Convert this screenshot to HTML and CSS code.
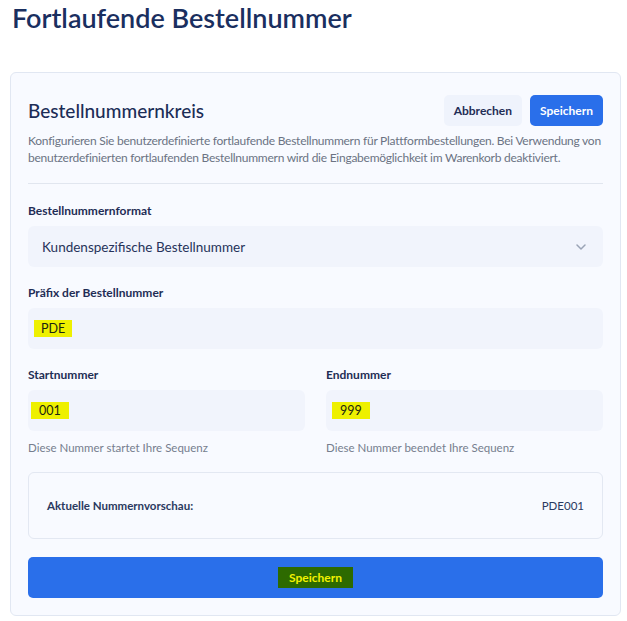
FILE: index.html
```html
<!DOCTYPE html>
<html lang="de">
<head>
<meta charset="utf-8">
<link rel="stylesheet" href="styles.css">
</head>
<body>
<h1 class="page-title">Fortlaufende Bestellnummer</h1>
<section class="card">
  <div class="card-head">
    <h2 class="card-title">Bestellnummernkreis</h2>
    <div class="actions">
      <button class="btn btn-light">Abbrechen</button>
      <button class="btn btn-primary">Speichern</button>
    </div>
  </div>
  <p class="desc">Konfigurieren Sie benutzerdefinierte fortlaufende Bestellnummern für Plattformbestellungen. Bei Verwendung von benutzerdefinierten fortlaufenden Bestellnummern wird die Eingabemöglichkeit im Warenkorb deaktiviert.</p>
  <hr class="divider">
  <div class="field first">
    <label class="label">Bestellnummernformat</label>
    <div class="control select">
      <span>Kundenspezifische Bestellnummer</span>
      <svg class="chev" width="12" height="8" viewBox="0 0 12 8"><path d="M2 2l4 4 4-4" fill="none" stroke="#9aa3b5" stroke-width="1.5" stroke-linecap="round" stroke-linejoin="round"/></svg>
    </div>
  </div>
  <div class="field">
    <label class="label">Präfix der Bestellnummer</label>
    <div class="control"><span class="hl hl-prefix">PDE</span></div>
  </div>
  <div class="row">
    <div class="field">
      <label class="label">Startnummer</label>
      <div class="control"><span class="hl hl-start">001</span></div>
      <p class="help">Diese Nummer startet Ihre Sequenz</p>
    </div>
    <div class="field">
      <label class="label">Endnummer</label>
      <div class="control"><span class="hl">999</span></div>
      <p class="help">Diese Nummer beendet Ihre Sequenz</p>
    </div>
  </div>
  <div class="preview">
    <span class="preview-label">Aktuelle Nummernvorschau:</span>
    <span class="preview-value">PDE001</span>
  </div>
  <button class="btn-block"><span class="hl-dark">Speichern</span></button>
</section>
</body>
</html>
```

FILE: styles.css
```css
* { box-sizing: border-box; }
body {
  margin: 0;
  padding: 0 6px 0 10px;
  background: #fff;
  font-family: "Lato", "Liberation Sans", sans-serif;
  color: #1f2d55;
}
.page-title {
  margin: 0;
  padding: 0 0 0 2px;
  height: 72px;
  font-size: 27px;
  font-weight: 600;
  color: #1a2f5f;
  line-height: 36px;
}
.card {
  background: #f8faff;
  border: 1px solid #e1e7f2;
  border-radius: 6px;
  padding: 22px 17px 17px 17px;
}
.card-head {
  display: flex;
  justify-content: space-between;
  align-items: center;
}
.card-title {
  margin: 0;
  font-size: 19px;
  font-weight: 500;
  color: #1c2d57;
}
.actions { display: flex; gap: 8px; }
.btn {
  font-family: inherit;
  font-size: 12px;
  font-weight: 700;
  height: 31px;
  border: 0;
  border-radius: 5px;
  padding: 0 10px;
}
.btn-light { background: #eff3fc; color: #1f2d55; }
.btn-primary { background: #2a6fea; color: #fff; }
.desc {
  margin: 6px 0 0;
  font-size: 12px;
  letter-spacing: -0.25px;
  line-height: 17px;
  color: #6b7383;
}
.divider {
  margin: 17px 0 0;
  border: 0;
  border-top: 1px solid #e1e6ef;
}
.field { display: flex; flex-direction: column; margin-top: 18px; }
.field.first { margin-top: 19px; }
.label {
  font-size: 12px;
  font-weight: 700;
  color: #1f2d55;
  line-height: 16px;
  margin-bottom: 7px;
}
.control {
  height: 41px;
  background: #f1f4fc;
  border-radius: 6px;
  display: flex;
  align-items: center;
  padding: 0 6px;
  font-size: 12.5px;
  color: #26335a;
}
.select {
  padding: 0 16px 0 14px;
  justify-content: space-between;
  font-size: 13.5px;
}
.hl {
  background: #eef000;
  color: #1a2410;
  padding: 1px 8px;
}
.hl-start { margin-left: -3px; }
.hl-prefix { padding: 1px 7px; }
.row {
  display: grid;
  grid-template-columns: 1fr 1fr;
  gap: 21px;
}
.help {
  margin: 10px 0 0;
  font-size: 11.5px;
  color: #767e8e;
}
.preview {
  margin-top: 18px;
  height: 67px;
  border: 1px solid #e3e8f2;
  border-radius: 6px;
  background: #f8faff;
  display: flex;
  justify-content: space-between;
  align-items: center;
  padding: 0 18px;
  font-size: 11.5px;
  color: #2a3960;
}
.preview-label { font-weight: 700; }
.btn-block {
  display: block;
  width: 100%;
  margin-top: 18px;
  height: 41px;
  background: #2a6fea;
  border: 0;
  border-radius: 5px;
  font-family: inherit;
  font-size: 12px;
  font-weight: 700;
}
.hl-dark {
  background: #2d6a00;
  color: #f2f200;
  padding: 3px 11px;
}
```
